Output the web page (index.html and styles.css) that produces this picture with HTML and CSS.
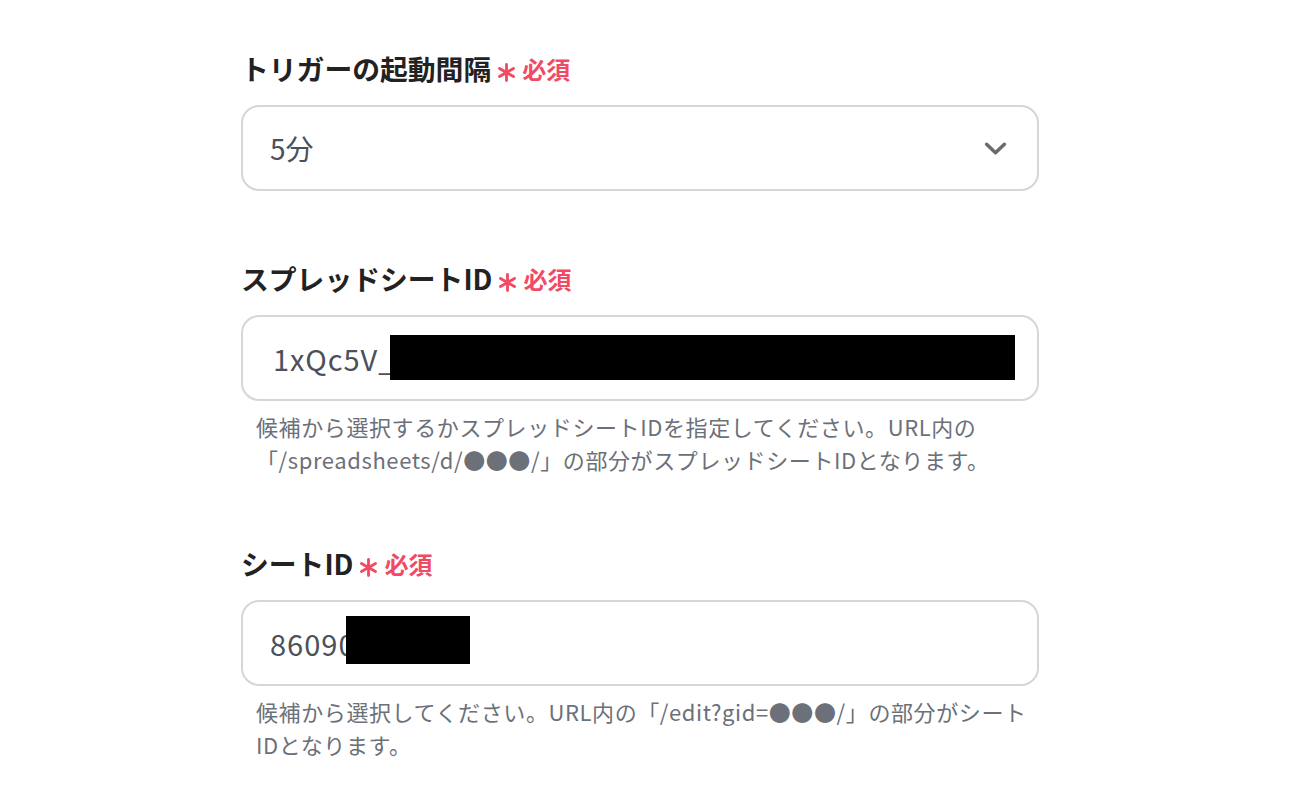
FILE: index.html
```html
<!DOCTYPE html>
<html lang="ja">
<head>
<meta charset="utf-8">
<title>フォーム</title>
<link rel="stylesheet" href="styles.css">
</head>
<body>
<div class="form">
  <div class="field">
    <div class="label">
      <span class="label-text">トリガーの起動間隔</span>
      <svg class="asterisk" viewBox="0 0 20 20" aria-hidden="true"><path d="M10 1.5V18.5M2.6 5.75L17.4 14.25M2.6 14.25L17.4 5.75"/></svg>
      <span class="required">必須</span>
    </div>
    <div class="control select">
      <span class="value">5分</span>
      <svg class="chevron" viewBox="0 0 22 14" aria-hidden="true"><path d="M2.5 3L11 11L19.5 3"/></svg>
    </div>
  </div>

  <div class="field">
    <div class="label">
      <span class="label-text">スプレッドシートID</span>
      <svg class="asterisk" viewBox="0 0 20 20" aria-hidden="true"><path d="M10 1.5V18.5M2.6 5.75L17.4 14.25M2.6 14.25L17.4 5.75"/></svg>
      <span class="required">必須</span>
    </div>
    <div class="control input">
      <span class="value value-id">1xQc5V_</span>
      <span class="redact redact-1"></span>
    </div>
    <p class="help">候補から選択するかスプレッドシートIDを指定してください。URL内の<br>「/spreadsheets/d/●●●/」の部分がスプレッドシートIDとなります。</p>
  </div>

  <div class="field">
    <div class="label">
      <span class="label-text">シートID</span>
      <svg class="asterisk" viewBox="0 0 20 20" aria-hidden="true"><path d="M10 1.5V18.5M2.6 5.75L17.4 14.25M2.6 14.25L17.4 5.75"/></svg>
      <span class="required">必須</span>
    </div>
    <div class="control input">
      <span class="value value-num">86090</span>
      <span class="redact redact-2"></span>
    </div>
    <p class="help">候補から選択してください。URL内の「/edit?gid=●●●/」の部分がシート<br>IDとなります。</p>
  </div>
</div>
</body>
</html>
```

FILE: styles.css
```css
* { box-sizing: border-box; }

html, body {
  margin: 0;
  background: #ffffff;
}

body {
  font-family: "Noto Sans CJK JP", "Noto Sans", "Liberation Sans", sans-serif;
  color: #222222;
}

.form {
  width: 1039px;
  padding: 48px 0 0 241px;
  display: flex;
  flex-direction: column;
  gap: 67px;
}

.field {
  display: flex;
  flex-direction: column;
}

.label {
  height: 40px;
  display: flex;
  align-items: center;
}

.label-text {
  font-size: 27.8px;
  font-weight: 700;
  color: #222222;
}

.asterisk {
  width: 19px;
  height: 19px;
  margin: 8px 0 0 6px;
  fill: none;
  stroke: #f24a64;
  stroke-width: 3;
  stroke-linecap: round;
}

.required {
  margin-left: 6px;
  font-size: 24px;
  font-weight: 700;
  color: #f24a64;
}

.control {
  position: relative;
  margin-top: 17px;
  height: 86px;
  border: 2px solid #d3d6db;
  border-radius: 18px;
  display: flex;
  align-items: center;
  padding: 0 28px 0 27px;
  background: #ffffff;
}

.value {
  font-size: 28px;
  color: #4b5059;
  line-height: 1;
}

.value-id,
.value-num {
  font-size: 29px;
  letter-spacing: 1px;
}

.value-id {
  padding-left: 3px;
}

.select {
  justify-content: space-between;
}

.chevron {
  width: 23px;
  height: 15px;
  margin-right: 2px;
  fill: none;
  stroke: #6b6b6e;
  stroke-width: 3.4;
  stroke-linecap: round;
  stroke-linejoin: round;
}

.redact {
  position: absolute;
  background: #000000;
}

.redact-1 {
  left: 147px;
  top: 18px;
  width: 625px;
  height: 45px;
}

.redact-2 {
  left: 103px;
  top: 14px;
  width: 124px;
  height: 48px;
}

.help {
  margin: 9px 0 0 15px;
  font-size: 22px;
  line-height: 33px;
  letter-spacing: 0.6px;
  color: #6b7079;
}
```
